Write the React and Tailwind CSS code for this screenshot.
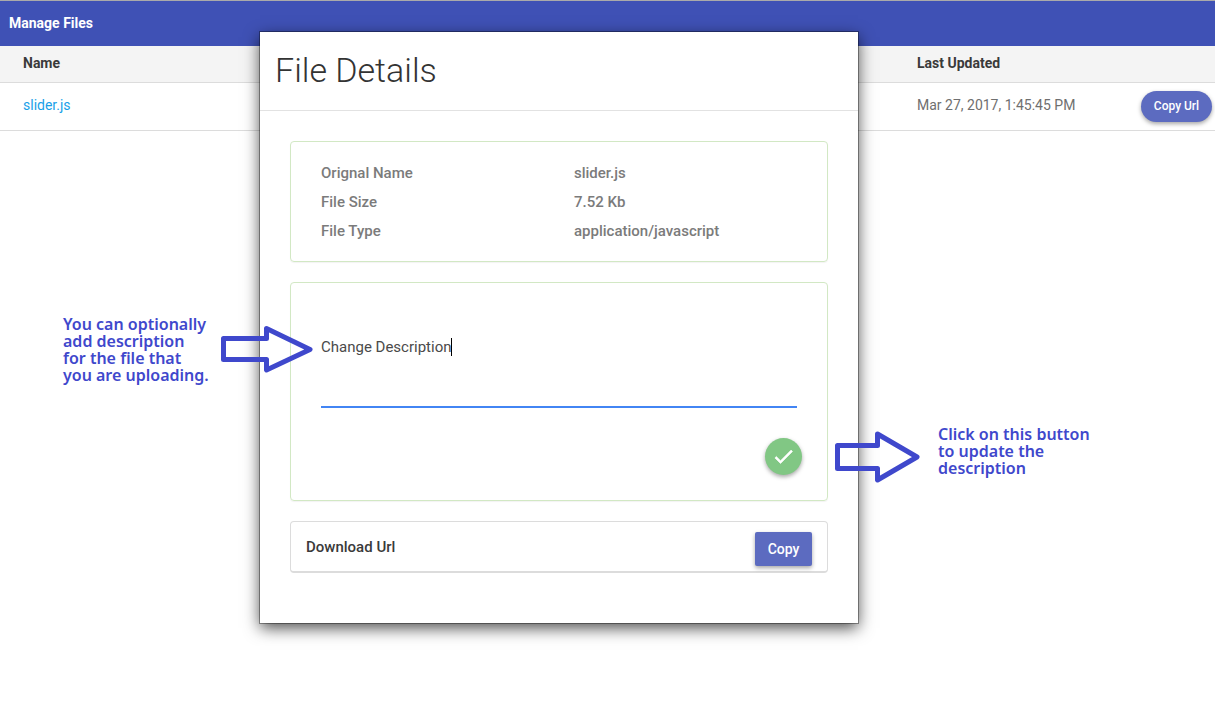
import React, { useState } from "react";

const details = [
  ["Orignal Name", "slider.js"],
  ["File Size", "7.52 Kb"],
  ["File Type", "application/javascript"],
];

function FilesTable() {
  return (
    <table className="w-full table-fixed border-collapse text-left text-sm">
      <thead>
        <tr className="h-9 border-b border-[#dcdcdc] bg-[#f4f4f4] text-[#3a3a3a]">
          <th className="pb-0.5 pl-[23px] font-bold">Name</th>
          <th className="w-[201px] pb-0.5 font-bold">Last Updated</th>
          <th className="w-[97px]" aria-label="Actions"></th>
        </tr>
      </thead>
      <tbody>
        <tr className="h-12 border-b border-[#dcdcdc]">
          <td className="pb-0.5 pl-[23px]">
            <a href="#slider" className="text-[#1a9fe8]">slider.js</a>
          </td>
          <td className="pb-0.5 text-[#6f6f6f]">Mar 27, 2017, 1:45:45 PM</td>
          <td className="pr-[3px] text-right">
            <button className="h-[31px] w-[71px] rounded-full bg-[#5c6bc0] text-xs font-medium text-white shadow-[0_2px_4px_rgba(0,0,0,0.35)]">
              Copy Url
            </button>
          </td>
        </tr>
      </tbody>
    </table>
  );
}

function FileDialog() {
  const [text, setText] = useState("Change Description");
  return (
    <section
      role="dialog"
      aria-labelledby="dialog-title"
      className="absolute top-8 left-[260px] w-[598px] bg-white pb-[50px] shadow-[0_0_0_1px_rgba(0,0,0,0.35),0_5px_15px_rgba(0,0,0,0.7)]"
    >
      <h2 id="dialog-title" className="h-[79px] border-b border-[#e2e2e2] px-[15px] pt-4 text-[34px] leading-[44px] font-light text-[#333]">
        File Details
      </h2>
      <div className="flex flex-col gap-5 px-[30px] pt-[30px]">
        <dl className="flex h-[121px] flex-col gap-[9px] rounded border border-[#d2e8c4] px-[30px] pt-[21px] text-[15px] leading-5 font-medium text-[#7b7b7b] shadow-[0_1px_1px_rgba(0,0,0,0.05)]">
          {details.map(([label, value]) => (
            <div key={label} className="flex">
              <dt className="w-[253px]">{label}</dt>
              <dd>{value}</dd>
            </div>
          ))}
        </dl>
        <form className="flex h-[219px] flex-col rounded border border-[#d2e8c4] px-[30px] pt-[53px] shadow-[0_1px_1px_rgba(0,0,0,0.05)]" onSubmit={(e) => e.preventDefault()}>
          <div className="grid h-[72px] border-b-2 border-[#4285f4]">
            <textarea
              aria-label="Description"
              value={text}
              onChange={(e) => setText(e.target.value)}
              className="col-start-1 row-start-1 resize-none bg-transparent text-[15px] leading-[22px] text-[#4a4a4a] outline-none"
            />
            <span aria-hidden="true" className="pointer-events-none col-start-1 row-start-1 mt-0.5 ml-[130px] h-[18px] w-px bg-black"></span>
          </div>
          <button aria-label="Update description" className="mt-[30px] -mr-[5px] flex size-[37px] items-center justify-center self-end rounded-full bg-[#81c784] shadow-[0_2px_4px_rgba(0,0,0,0.35)]">
            <svg className="size-6" viewBox="0 0 24 24" fill="#fff" stroke="#fff" strokeWidth="0.6">
              <path d="M8.500 15.670 4.330 11.500l-1.420 1.410L8.500 18.500l12-12-1.410-1.410z" />
            </svg>
          </button>
        </form>
        <div className="flex h-[52px] items-center justify-between rounded border border-b-2 border-[#dcdcdc] pt-1 pr-[15px] pl-[15px]">
          <span className="pb-0.5 text-[15px] font-medium text-[#3a3a3a]">Download Url</span>
          <button className="h-[34px] w-[57px] rounded-xs bg-[#5c6bc0] text-sm font-medium text-white shadow-[0_2px_4px_rgba(0,0,0,0.35)]">
            Copy
          </button>
        </div>
      </div>
    </section>
  );
}

export default function App() {
  return (
    <div className="relative min-h-screen overflow-hidden bg-white font-['Roboto',sans-serif]">
      <header className="flex h-[46px] items-center border-t border-[#aaa] bg-[#3f51b5] px-[9px] pb-0.5">
        <h1 className="text-sm font-bold text-white">Manage Files</h1>
      </header>
      <FilesTable />
      <FileDialog />

      <p className="absolute top-[316px] left-[63px] font-['Noto_Sans',sans-serif] text-base leading-[17px] font-semibold whitespace-nowrap text-[#3f48cc]">
        You can optionally<br />add description<br />for the file that<br />you are uploading.
      </p>
      <svg className="absolute top-[324px] left-[219px] h-[50px] w-[96px]" viewBox="219 324 96 50" fill="none" stroke="#3f48cc" strokeWidth="5" strokeLinejoin="round">
        <path d="M223.500 338.500H266.500V328.500L310 349.500L266.500 370V359.500H223.500Z" />
      </svg>

      <p className="absolute top-[426px] left-[938px] font-['Noto_Sans',sans-serif] text-base leading-[17px] font-semibold whitespace-nowrap text-[#3f48cc]">
        Click on this button<br />to update the<br />description
      </p>
      <svg className="absolute top-[429px] left-[833px] h-[56px] w-[90px]" viewBox="833 429 90 56" fill="none" stroke="#3f48cc" strokeWidth="5" strokeLinejoin="round">
        <path d="M837.500 445.500H877.500V434L917 457L877.500 480V468.500H837.500Z" />
      </svg>
    </div>
  );
}
